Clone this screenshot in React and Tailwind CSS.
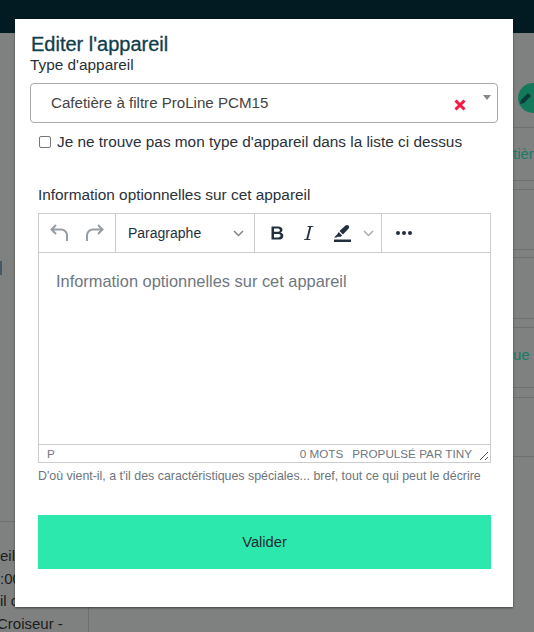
const font = { fontFamily: '"Liberation Sans", Arial, sans-serif' };

function Rule({ className }) {
  return <div className={"absolute right-0 left-[513px] h-px bg-[#6f6f6f] " + className} />;
}

export default function App() {
  return (
    <div className="relative h-[632px] w-[534px] overflow-hidden bg-[#7f8180]" style={font}>
      <div className="h-[33px] bg-[#021a22]" />

      {/* dimmed page behind the dialog */}
      <div className="absolute top-[261px] left-0 h-[14px] w-[2px] bg-[#455863]" />
      <div className="absolute left-[518px] top-[83px] flex h-[30px] w-[30px] items-center justify-center rounded-full bg-[#14795a]">
        <svg width="14" height="14" viewBox="0 0 14 14" className="mr-[14px]">
          <path d="M1 13l1-4 7-7 3 3-7 7z" fill="#0b3a3a" />
        </svg>
      </div>
      <Rule className="top-[127px]" />
      <span className="absolute left-[513px] top-[144px] text-[15px] leading-5 whitespace-nowrap text-[#1b7a66]">tière</span>
      <Rule className="top-[180px]" />
      <Rule className="top-[189px]" />
      <Rule className="top-[249px]" />
      <Rule className="top-[257px]" />
      <Rule className="top-[318px]" />
      <Rule className="top-[327px]" />
      <span className="absolute left-[513px] top-[345px] text-[15px] leading-5 whitespace-nowrap text-[#1b7a66]">ue</span>
      <Rule className="top-[387px]" />
      <Rule className="top-[397px]" />
      <div className="absolute top-[456px] right-0 h-px w-[21px] bg-[#6f6f6f]" />
      <div className="absolute top-[521px] left-0 h-px w-[15px] bg-[#6f6f6f]" />
      <div className="absolute top-[545px] -left-[3px] text-[15px] leading-[22.6px] whitespace-nowrap text-[#1c1c1c]">
        <div className="pl-[3px]">eil</div>
        <div className="pl-[3px]">:00</div>
        <div className="pl-[3px]">il c</div>
        <div>Croiseur -</div>
      </div>
      <div className="absolute top-[607px] left-[88px] h-[25px] w-px bg-[#6f6f6f]" />

      {/* dialog */}
      <div className="absolute top-[19px] left-[15px] flex h-[588px] w-[498px] flex-col bg-white pt-[14px] pr-[15px] pl-[15px] shadow-[0_1px_2px_rgba(0,0,0,0.5)]">
        <h2 className="ml-px text-[20px] leading-[22px] font-normal whitespace-nowrap text-[#0f3d4c] [-webkit-text-stroke:0.3px_#0f3d4c]">Editer l'appareil</h2>
        <label className="text-[15.36px] leading-[20px] text-[#2a3138]">Type d'appareil</label>

        <div className="relative mt-[8px] flex h-[40px] w-[468px] items-center rounded border border-[#aaa] pt-px pl-[20px] text-[15.1px] text-[#444]">
          Cafetière à filtre ProLine PCM15
          <svg width="12" height="12" viewBox="0 0 12 12" className="absolute top-[15px] left-[423px]">
            <path d="M1.500 1.500l9 9M10.500 1.500l-9 9" stroke="#f9183f" strokeWidth="3" />
          </svg>
          <span className="absolute top-[11px] left-[452px] h-0 w-0 border-x-4 border-t-5 border-x-transparent border-t-[#888]" />
        </div>

        <label className="mt-[9px] ml-[9px] flex h-[20px] items-center text-[15.36px] leading-5 whitespace-nowrap text-[#2a3138]">
          <span className="mr-[6px] h-[12px] w-[12px] shrink-0 rounded-[2px] border border-[#777] bg-white" />
          Je ne trouve pas mon type d'appareil dans la liste ci dessus
        </label>

        <label className="mt-[33px] ml-[8px] text-[15.36px] leading-5 text-[#2a3138]">Information optionnelles sur cet appareil</label>

        <div className="mt-[8px] ml-[8px] flex h-[250px] w-[453px] flex-col border border-[#ccc]">
          <div className="flex h-[39px] shrink-0 border-b border-[#ccc]">
            <div className="flex w-[77px] items-center gap-[10px] border-r border-[#ccc] pl-[9px]">
              <svg width="24" height="24" viewBox="0 0 24 24" fill="none" stroke="#959ca2" strokeWidth="2">
                <path d="M8 4 3.500 8.500 8 13M4 8.500h9a6 6 0 0 1 6 6V20" />
              </svg>
              <svg width="24" height="24" viewBox="0 0 24 24" fill="none" stroke="#959ca2" strokeWidth="2">
                <path d="M16 4l4.500 4.500L16 13M20 8.500h-9a6 6 0 0 0-6 6V20" />
              </svg>
            </div>
            <div className="flex w-[139px] items-center justify-between border-r border-[#ccc] pr-[10px] pl-[12px] text-[14px] text-[#222f3e]">
              Paragraphe
              <svg width="11" height="7" viewBox="0 0 11 7" fill="none" stroke="#7d858c" strokeWidth="1.500">
                <path d="M1 1l4.500 4.500L10 1" />
              </svg>
            </div>
            <div className="flex w-[127px] items-center border-r border-[#ccc]">
              <svg width="24" height="24" viewBox="0 0 24 24" className="ml-[10px]" fill="#222f3e">
                <path fillRule="evenodd" d="M6.500 5.500H13c2.800 0 4.500 1.300 4.500 3.300 0 1.300-.8 2.300-2 2.800 1.700.4 2.800 1.600 2.800 3.300 0 2.400-1.900 3.600-4.800 3.600h-7zM9 7.600v3.200h3.500c1.500 0 2.400-.6 2.400-1.600s-.9-1.600-2.400-1.600zM9 12.900v3.500h4c1.600 0 2.600-.6 2.600-1.800s-1-1.700-2.600-1.700z" />
              </svg>
              <svg width="24" height="24" viewBox="0 0 24 24" className="ml-[8px]" fill="#222f3e">
                <path d="M10.500 5h6v.8l-2.300.3-3 11.800 2.300.3v.8H7v-.8l2.300-.3 3-11.800-1.800-.3z" />
              </svg>
              <svg width="20" height="20" viewBox="0 0 20 20" className="ml-[12px]" fill="#222f3e">
                <path d="M12.500 2.500c1-.8 2.100-.8 3 0s.9 2 .1 2.900L10 11.500 6.500 8zM5.700 9l3.400 3.400-1.300 1.300H4.500L3.600 14.600H1l3.300-3.400zM1 16.500h17V19H1z" />
              </svg>
              <svg width="11" height="7" viewBox="0 0 11 7" fill="none" stroke="#a5abb0" strokeWidth="1.500" className="ml-[10px]">
                <path d="M1 1l4.500 4.500L10 1" />
              </svg>
            </div>
            <div className="flex items-center gap-[2px] pl-[14px]">
              <span className="h-[4px] w-[4px] rounded-full bg-[#222f3e]" />
              <span className="h-[4px] w-[4px] rounded-full bg-[#222f3e]" />
              <span className="h-[4px] w-[4px] rounded-full bg-[#222f3e]" />
            </div>
          </div>
          <div className="flex-1 px-[17px] pt-[18px] text-[16.4px] leading-5 whitespace-nowrap text-[#6f7780]">Information optionnelles sur cet appareil</div>
          <div className="relative flex h-[18px] shrink-0 items-center justify-between border-t border-[#ccc] pr-[18px] pl-[8px] text-[11.7px] text-[#6f7780]">
            <span>P</span>
            <span className="flex gap-[9px]"><span>0 MOTS</span><span>PROPULSÉ PAR TINY</span></span>
            <svg width="10" height="10" viewBox="0 0 10 10" className="absolute right-[1px] bottom-[1px]" stroke="#555" fill="none">
              <path d="M1 9l8-8M6 9l3-3" />
            </svg>
          </div>
        </div>

        <p className="mt-[3px] ml-[8px] text-[12.4px] leading-5 whitespace-nowrap text-[#6c757d]">D'où vient-il, a t'il des caractéristiques spéciales... bref, tout ce qui peut le décrire</p>

        <button className="mt-[29px] ml-[8px] h-[54px] w-[453px] bg-[#2de8ad] text-[14.7px] text-[#222b33]">Valider</button>
      </div>
    </div>
  );
}
